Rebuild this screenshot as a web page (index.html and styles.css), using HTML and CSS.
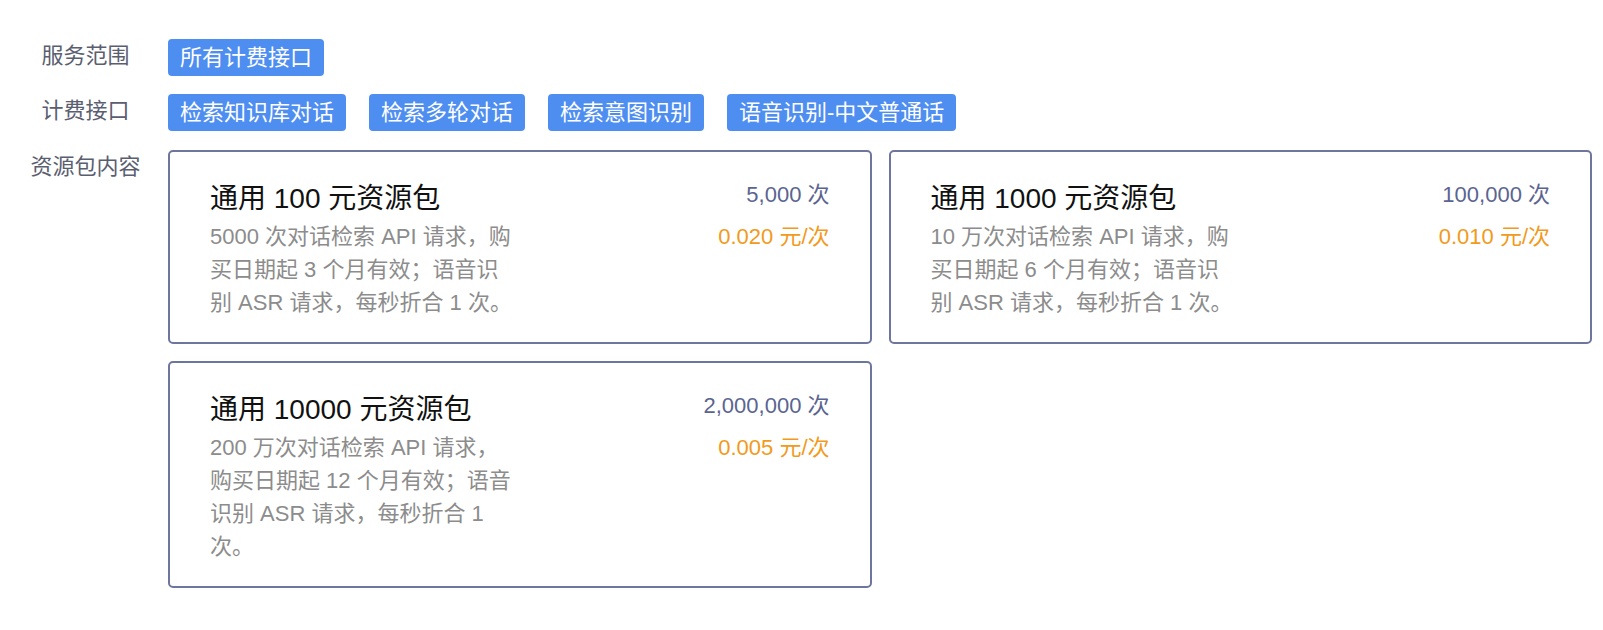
FILE: index.html
```html
<!DOCTYPE html>
<html lang="zh-CN">
<head>
<meta charset="utf-8">
<title>资源包</title>
<link rel="stylesheet" href="styles.css">
</head>
<body>
<div class="page">
  <div class="row row-services">
    <div class="label">服务范围</div>
    <div class="tags">
      <span class="tag">所有计费接口</span>
    </div>
  </div>
  <div class="row row-apis">
    <div class="label">计费接口</div>
    <div class="tags">
      <span class="tag">检索知识库对话</span>
      <span class="tag">检索多轮对话</span>
      <span class="tag">检索意图识别</span>
      <span class="tag">语音识别-中文普通话</span>
    </div>
  </div>
  <div class="row row-packs">
    <div class="label">资源包内容</div>
    <div class="cards">
      <div class="card">
        <div class="card-main">
          <div class="card-title">通用 100 元资源包</div>
          <div class="card-desc">5000 次对话检索 API 请求，购<br>买日期起 3 个月有效；语音识<br>别 ASR 请求，每秒折合 1 次。</div>
        </div>
        <div class="card-side">
          <div class="count">5,000 次</div>
          <div class="price">0.020 元/次</div>
        </div>
      </div>
      <div class="card">
        <div class="card-main">
          <div class="card-title">通用 1000 元资源包</div>
          <div class="card-desc">10 万次对话检索 API 请求，购<br>买日期起 6 个月有效；语音识<br>别 ASR 请求，每秒折合 1 次。</div>
        </div>
        <div class="card-side">
          <div class="count">100,000 次</div>
          <div class="price">0.010 元/次</div>
        </div>
      </div>
      <div class="card">
        <div class="card-main">
          <div class="card-title">通用 10000 元资源包</div>
          <div class="card-desc">200 万次对话检索 API 请求，<br>购买日期起 12 个月有效；语音<br>识别 ASR 请求，每秒折合 1<br>次。</div>
        </div>
        <div class="card-side">
          <div class="count">2,000,000 次</div>
          <div class="price">0.005 元/次</div>
        </div>
      </div>
    </div>
  </div>
</div>
</body>
</html>
```
FILE: styles.css
```css
* { box-sizing: border-box; }
html, body { margin: 0; padding: 0; background: #ffffff; }
body {
  font-family: "Liberation Sans", "Noto Sans CJK SC", sans-serif;
  color: #333;
}
.page {
  padding: 39px 11px 0 0;
}
.row {
  display: grid;
  grid-template-columns: 168px 1fr;
  align-items: start;
}
.row-services { margin-bottom: 18px; }
.row-apis { margin-bottom: 19px; }
.label {
  font-size: 22px;
  line-height: 34px;
  color: #5a5e70;
  text-align: center;
  padding-left: 3px;
}
.tags {
  display: flex;
  flex-wrap: wrap;
  gap: 23px;
}
.tag {
  display: inline-block;
  background: #4e8ef1;
  color: #ffffff;
  font-size: 22px;
  line-height: 37px;
  padding: 0 12px;
  border-radius: 4px;
}
.cards {
  display: grid;
  grid-template-columns: 1fr 1fr;
  gap: 17px;
}
.card {
  display: flex;
  justify-content: space-between;
  border: 2px solid #6f769d;
  border-radius: 5px;
  padding: 26px 40px 23px 40px;
}
.card-title {
  font-size: 28px;
  line-height: 42px;
  color: #111111;
}
.card-desc {
  font-size: 22px;
  line-height: 33px;
  color: #8c8c8c;
  white-space: nowrap;
}
.card-side {
  text-align: right;
  font-size: 22px;
  line-height: 33px;
}
.count {
  margin-top: 0;
  color: #5b6491;
}
.price {
  margin-top: 9px;
  color: #f29a1c;
}
```
